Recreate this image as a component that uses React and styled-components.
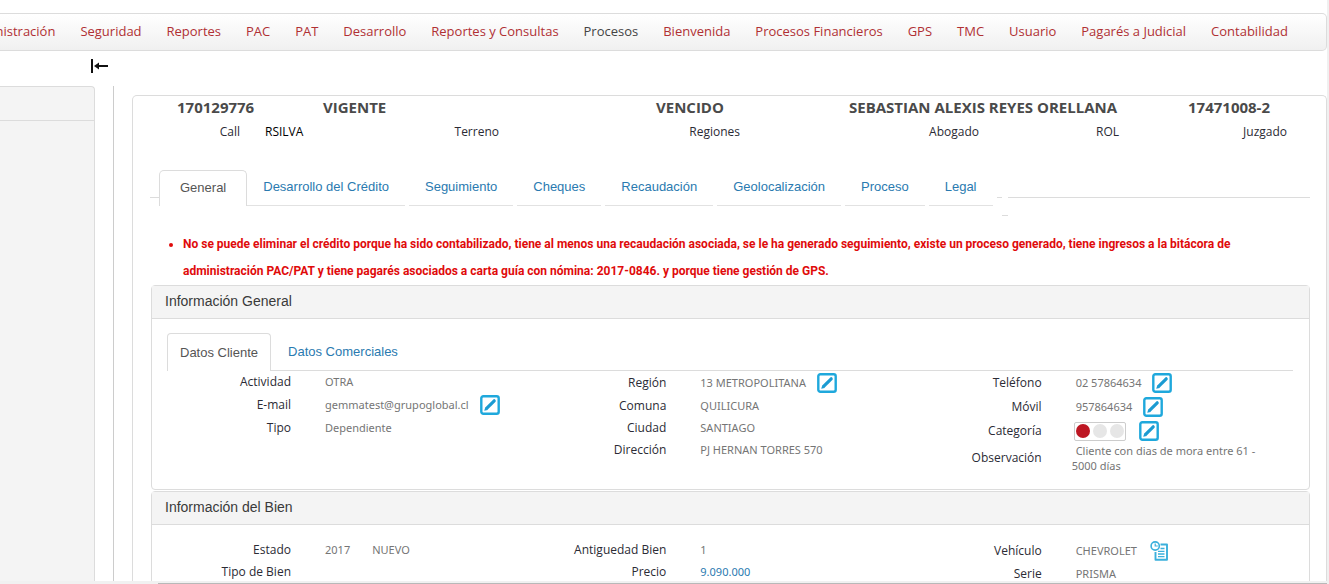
import React from 'react';
import styled, { createGlobalStyle } from 'styled-components';

const humanist = '"Open Sans", "Noto Sans", sans-serif';
const humanistSmall = '"Noto Sans", "Open Sans", sans-serif';
const grotesque = '"Liberation Sans", Arial, sans-serif';
const line = '#dcdcdc';

const GlobalStyle = createGlobalStyle`
  *, *::before, *::after { box-sizing: border-box; }
  html, body, #root { height: 100%; }
  body {
    margin: 0;
    overflow: hidden;
    background: #fff;
    font-family: ${humanist};
    font-size: 12px;
    color: #2b2b35;
  }
  h2, ul, dl, dd, dt, p { margin: 0; padding: 0; font-weight: inherit; }
  ul { list-style: none; }
  a { text-decoration: none; }
`;

const Page = styled.div`
  height: 100%;
  display: flex;
  flex-direction: column;
  overflow: hidden;
  padding-top: 13px;
  border-right: 2px solid #f0f0f0;
`;

const MainNav = styled.nav`
  flex: none;
  height: 38px;
  border: 1px solid ${line};
  border-left: 0;
  border-radius: 0 5px 5px 0;
  background: linear-gradient(#fff, #f0f0f0);
  overflow: hidden;
`;

const NavList = styled.ul`
  display: flex;
  justify-content: space-between;
  margin-left: -36px;
  padding-right: 38px;
  line-height: 34px;
  white-space: nowrap;
`;

const NavLink = styled.a`
  font-size: 13px;
  font-weight: 500;
  color: ${(p) => (p.$current ? '#444' : '#b03034')};
`;

const Workspace = styled.div`
  flex: 1;
  min-height: 0;
  display: flex;
`;

const Sidebar = styled.aside`
  flex: none;
  width: 114px;
  display: flex;
  flex-direction: column;
`;

const CollapseButton = styled.button`
  align-self: flex-end;
  flex: none;
  width: 28px;
  height: 35px;
  padding: 7px 0 12px;
  border: 0;
  background: none;
  line-height: 0;
  cursor: pointer;
`;

const SideColumns = styled.div`
  flex: 1;
  display: flex;
  justify-content: space-between;
  border-right: 1px solid #ccc;
`;

const SidePanel = styled.div`
  width: 95px;
  border: solid ${line};
  border-width: 1px 1px 0 0;
  border-radius: 0 4px 0 0;
  background: #f4f4f4;
`;

const SidePanelHeader = styled.div`
  height: 34px;
  border-bottom: 1px solid ${line};
`;

const Content = styled.main`
  flex: 1;
  min-width: 0;
  margin: 44px 0 0 18px;
  border: 1px solid ${line};
  border-bottom: 0;
  border-radius: 5px 5px 0 0;
  overflow: hidden;
`;

const CreditSummary = styled.div`
  display: grid;
  grid-template-columns: 146fr 333fr 193fr 339fr 138fr;
  padding: 0 0 2px 44px;
  line-height: 22px;
  font-size: 15px;
  font-weight: 700;
  color: #4a4a4a;
  white-space: nowrap;
`;

const Assignments = styled.dl`
  display: grid;
  grid-template-columns: 107fr 259fr 241fr 239fr 140fr 168fr;
  padding-right: 39px;
  line-height: 24px;
  font-weight: 500;
`;

const Assignment = styled.div`
  display: flex;
  justify-content: flex-end;
`;

const Assignee = styled.dd`
  width: 0;
  overflow: visible;
  text-indent: 25px;
  color: #000;
  white-space: nowrap;
`;

const MainTabs = styled.div`
  display: flex;
  align-items: flex-start;
  margin: 26px 16px 0 17px;
  font-family: ${grotesque};
`;

const TabRule = styled.span`
  height: ${(p) => p.$drop}px;
  flex: ${(p) => (p.$width ? `0 0 ${p.$width}px` : '1')};
  border-bottom: 1px solid ${line};
`;

const Tab = styled.button`
  flex: none;
  height: 36px;
  margin-right: 4px;
  padding: 0 16px 2px;
  border: 0;
  border-bottom: 1px solid #e2e2e2;
  background: none;
  font: 13px/33px ${grotesque};
  color: #2a7ab0;
  white-space: nowrap;
  cursor: pointer;

  &[aria-selected='true'] {
    margin-right: 0;
    padding: 0 20px 2px;
    border: 1px solid ${line};
    border-bottom: 0;
    border-radius: 5px 5px 0 0;
    color: #555;
  }
`;

const Warnings = styled.ul`
  margin: 15px 17px 0;
  padding: 0 20px 0 33px;
  list-style: disc;
  font: 700 12px/27px Roboto, ${grotesque};
  color: #e00b0b;
`;

const Panel = styled.section`
  margin: 0 16px 1px 18px;
  border: 1px solid ${line};
  border-radius: 4px;
`;

const PanelTitle = styled.h2`
  height: 33px;
  padding-left: 13px;
  border-bottom: 1px solid ${line};
  background: #f4f4f4;
  font: 14px/31px ${grotesque};
  color: #3a3a3a;
`;

const PanelBody = styled.div`
  padding: 14px 16px 16px 15px;
`;

const ClientTabs = styled.div`
  display: flex;
  height: 38px;
  border-bottom: 1px solid ${line};
`;

const ClientTab = styled.button`
  height: ${(p) => (p['aria-selected'] ? 38 : 37)}px;
  padding: 0 ${(p) => (p['aria-selected'] ? 12 : 17)}px;
  border: ${(p) => (p['aria-selected'] ? `1px solid ${line}` : '0')};
  border-bottom: 0;
  border-radius: 4px 4px 0 0;
  background: #fff;
  font: 13px/33px ${grotesque};
  color: ${(p) => (p['aria-selected'] ? '#555' : '#2a7ab0')};
  cursor: pointer;
`;

const FieldColumns = styled.div`
  display: grid;
  grid-template-columns: repeat(3, minmax(0, 1fr));
`;

const FieldList = styled.dl``;

const Field = styled.div`
  display: grid;
  grid-template-columns: 124px minmax(0, 1fr);
  column-gap: ${(p) => (p.$wrapped ? 30 : 34)}px;
  align-items: center;
  min-height: 22px;
`;

const FieldName = styled.dt`
  text-align: right;
  font-weight: 500;
  line-height: 22px;
`;

const FieldValue = styled.dd`
  display: flex;
  align-items: center;
  gap: ${(p) => p.$gap || 11}px;
  font: 11px/22px ${humanistSmall};
  color: #757575;
`;

const Note = styled.p`
  padding-right: 16px;
  font: 11px/15px ${humanistSmall};
  text-indent: 4px;
`;

const PriceLink = styled.a`
  color: #2a7ab0;
`;

const IconButton = styled.button`
  width: 20px;
  height: 24px;
  padding: 2px 0;
  border: 0;
  background: none;
  line-height: 0;
  cursor: pointer;
`;

const Lights = styled.span`
  display: flex;
  align-items: center;
  justify-content: center;
  gap: 3px;
  width: 52px;
  height: 19px;
  margin-left: -2px;
  border: 1px solid #ccc;
  border-radius: 2px;
`;

const Light = styled.i`
  width: 14px;
  height: 14px;
  border-radius: 50%;
  background: ${(p) => (p.$on ? '#bd1622' : '#e6e6e6')};
`;

const ScrollTrack = styled.div`
  flex: none;
  height: 3px;
  padding: 2px 0 0 158px;
  background: #f1f1f1;
`;

const ScrollThumb = styled.div`
  height: 1px;
  background: #b8b8b8;
`;

const EditButton = ({ label }) => (
  <IconButton type="button" aria-label={label}>
    <svg width="20" height="20" viewBox="0 0 20 20" fill="none">
      <rect x="1.3" y="1.3" width="17.4" height="17.4" rx="2" stroke="#1fa8dc" strokeWidth="2.4" />
      <path d="M4.2 15.8l1-3.4 2.5 2.5z" fill="#1b9bd2" />
      <path d="M6.1 13.9l6.6-6.6" stroke="#1b9bd2" strokeWidth="3.2" />
      <path d="M13.2 6.8l1-1" stroke="#1b9bd2" strokeWidth="3.2" strokeLinecap="round" />
    </svg>
  </IconButton>
);

const HistoryButton = () => (
  <IconButton type="button" aria-label="Historial del vehículo">
    <svg width="20" height="20" viewBox="0 0 20 20" fill="none" stroke="#3bb0dc">
      <path d="M10.5 3.5h6.5v15.2H5.5V11" strokeWidth="1.9" strokeLinejoin="round" />
      <circle cx="5.2" cy="5" r="4.1" strokeWidth="1.6" />
      <path d="M5.2 2.6V5h2.6" strokeWidth="1.2" />
      <path d="M10.5 7.5h4M8 10.3h6.5M8 13h6.5M8 15.6h6.5" strokeWidth="1.3" />
    </svg>
  </IconButton>
);

const navItems = [
  'Administración', 'Seguridad', 'Reportes', 'PAC', 'PAT', 'Desarrollo',
  'Reportes y Consultas', 'Procesos', 'Bienvenida', 'Procesos Financieros',
  'GPS', 'TMC', 'Usuario', 'Pagarés a Judicial', 'Contabilidad',
];

const creditTabs = [
  'Desarrollo del Crédito', 'Seguimiento', 'Cheques', 'Recaudación',
  'Geolocalización', 'Proceso', 'Legal',
];

const Row = ({ name, children, gap, wrapped }) => (
  <Field $wrapped={wrapped}>
    <FieldName>{name}</FieldName>
    <FieldValue $gap={gap}>{children}</FieldValue>
  </Field>
);

export default function App() {
  return (
    <Page>
      <GlobalStyle />
      <MainNav aria-label="Principal">
        <NavList>
          {navItems.map((item) => (
            <li key={item}>
              <NavLink href="#" $current={item === 'Procesos'}>{item}</NavLink>
            </li>
          ))}
        </NavList>
      </MainNav>

      <Workspace>
        <Sidebar>
          <CollapseButton type="button" aria-label="Contraer menú">
            <svg width="20" height="16" viewBox="0 0 20 16">
              <path d="M2 1v14" stroke="#111" strokeWidth="2" />
              <path d="M7 8h11" stroke="#111" strokeWidth="2" />
              <path d="M4 8l5-3.6v7.2z" fill="#111" />
            </svg>
          </CollapseButton>
          <SideColumns>
            <SidePanel><SidePanelHeader /></SidePanel>
          </SideColumns>
        </Sidebar>

        <Content>
          <CreditSummary>
            <span>170129776</span>
            <span>VIGENTE</span>
            <span>VENCIDO</span>
            <span>SEBASTIAN ALEXIS REYES ORELLANA</span>
            <span>17471008-2</span>
          </CreditSummary>
          <Assignments>
            <Assignment><dt>Call</dt><Assignee>RSILVA</Assignee></Assignment>
            {['Terreno', 'Regiones', 'Abogado', 'ROL', 'Juzgado'].map((name) => (
              <Assignment key={name}><dt>{name}</dt></Assignment>
            ))}
          </Assignments>

          <MainTabs role="tablist">
            <TabRule $drop={28} $width={9} />
            <Tab type="button" role="tab" aria-selected="true">General</Tab>
            {creditTabs.map((tab) => (
              <Tab key={tab} type="button" role="tab" aria-selected="false">{tab}</Tab>
            ))}
            <TabRule $drop={28} $width={5} />
            <TabRule $drop={46} $width={6} />
            <TabRule $drop={28} />
          </MainTabs>

          <Warnings>
            <li>
              No se puede eliminar el crédito porque ha sido contabilizado, tiene al menos una
              recaudación asociada, se le ha generado seguimiento, existe un proceso generado,
              tiene ingresos a la bitácora de administración PAC/PAT y tiene pagarés asociados a
              carta guía con nómina: 2017-0846. y porque tiene gestión de GPS.
            </li>
          </Warnings>

          <Panel>
            <PanelTitle>Información General</PanelTitle>
            <PanelBody>
              <ClientTabs role="tablist">
                <ClientTab type="button" role="tab" aria-selected={true}>Datos Cliente</ClientTab>
                <ClientTab type="button" role="tab" aria-selected={false}>Datos Comerciales</ClientTab>
              </ClientTabs>
              <FieldColumns>
                <FieldList>
                  <Row name="Actividad">OTRA</Row>
                  <Row name="E-mail">gemmatest@grupoglobal.cl<EditButton label="Editar e-mail" /></Row>
                  <Row name="Tipo">Dependiente</Row>
                </FieldList>
                <FieldList>
                  <Row name="Región">13 METROPOLITANA<EditButton label="Editar región" /></Row>
                  <Row name="Comuna">QUILICURA</Row>
                  <Row name="Ciudad">SANTIAGO</Row>
                  <Row name="Dirección">PJ HERNAN TORRES 570</Row>
                </FieldList>
                <FieldList>
                  <Row name="Teléfono">02 57864634<EditButton label="Editar teléfono" /></Row>
                  <Row name="Móvil">957864634<EditButton label="Editar móvil" /></Row>
                  <Row name="Categoría" gap={13}>
                    <Lights role="img" aria-label="Categoría roja"><Light $on /><Light /><Light /></Lights>
                    <EditButton label="Editar categoría" />
                  </Row>
                  <Row name="Observación" wrapped>
                    <Note>Cliente con dias de mora entre 61 - 5000 días</Note>
                  </Row>
                </FieldList>
              </FieldColumns>
            </PanelBody>
          </Panel>

          <Panel>
            <PanelTitle>Información del Bien</PanelTitle>
            <PanelBody>
              <FieldColumns>
                <FieldList>
                  <Row name="Estado" gap={22}><span>2017</span><span>NUEVO</span></Row>
                  <Row name="Tipo de Bien" />
                </FieldList>
                <FieldList>
                  <Row name="Antiguedad Bien">1</Row>
                  <Row name="Precio"><PriceLink href="#">9.090.000</PriceLink></Row>
                </FieldList>
                <FieldList>
                  <Row name="Vehículo" gap={13}>CHEVROLET<HistoryButton /></Row>
                  <Row name="Serie">PRISMA</Row>
                </FieldList>
              </FieldColumns>
            </PanelBody>
          </Panel>
        </Content>
      </Workspace>
      <ScrollTrack><ScrollThumb /></ScrollTrack>
    </Page>
  );
}
